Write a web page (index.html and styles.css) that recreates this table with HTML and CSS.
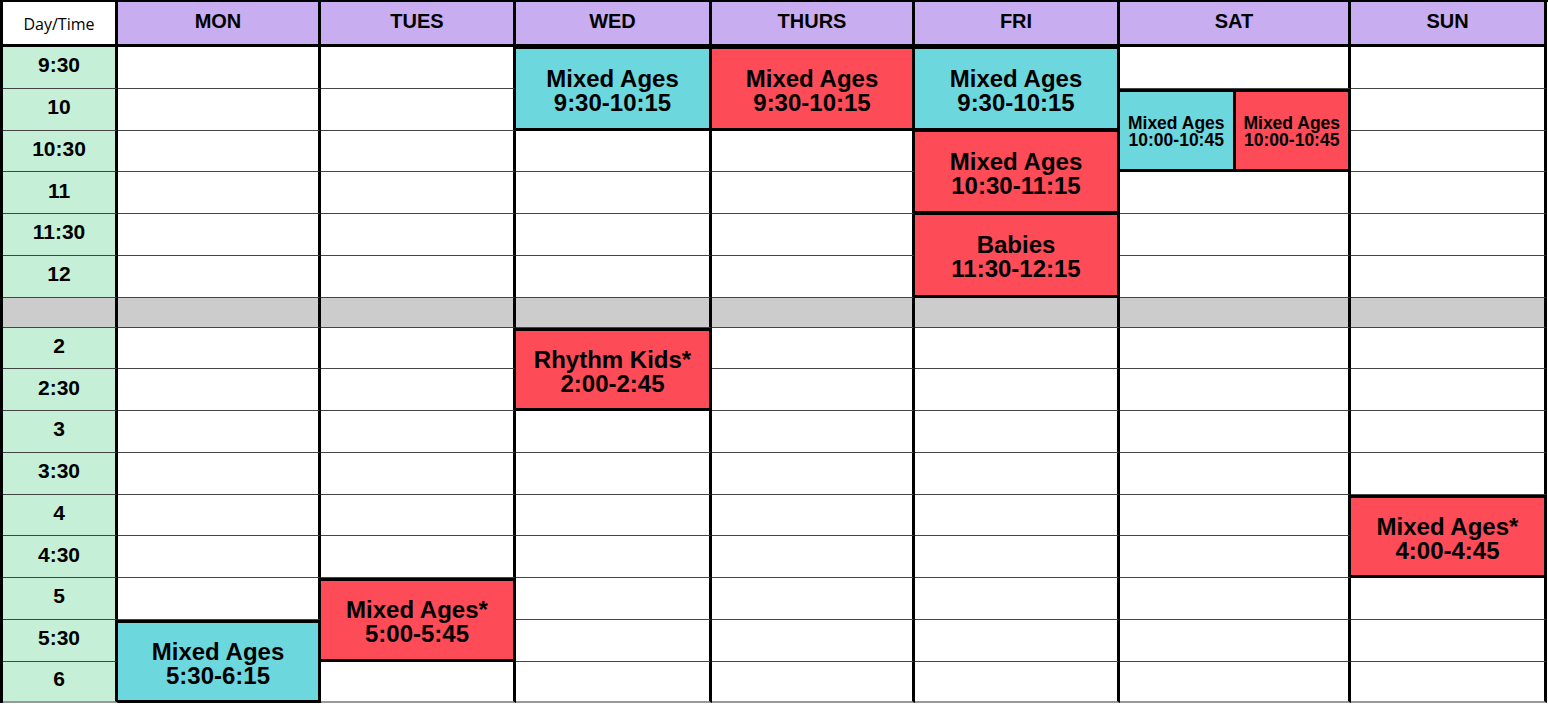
FILE: index.html
```html
<!DOCTYPE html>
<html>
<head>
<meta charset="utf-8">
<link rel="stylesheet" href="styles.css">
<title>Class Schedule</title>
</head>
<body>
<div class="schedule">
  <!-- header -->
  <div class="cell corner">Day/Time</div>
  <div class="cell head">MON</div>
  <div class="cell head">TUES</div>
  <div class="cell head">WED</div>
  <div class="cell head">THURS</div>
  <div class="cell head">FRI</div>
  <div class="cell head">SAT</div>
  <div class="cell head">SUN</div>

  <!-- 9:30 -->
  <div class="cell time">9:30</div>
  <div class="cell"></div>
  <div class="cell"></div>
  <div class="cell ev teal span2 top-head"><span>Mixed Ages<br>9:30-10:15</span></div>
  <div class="cell ev red span2 top-head"><span>Mixed Ages<br>9:30-10:15</span></div>
  <div class="cell ev teal span2 top-head"><span>Mixed Ages<br>9:30-10:15</span></div>
  <div class="cell"></div>
  <div class="cell"></div>

  <!-- 10 -->
  <div class="cell time">10</div>
  <div class="cell"></div>
  <div class="cell"></div>
  <div class="cell ev split span2">
    <div class="half teal"><span>Mixed Ages<br>10:00-10:45</span></div>
    <div class="half red"><span>Mixed Ages<br>10:00-10:45</span></div>
  </div>
  <div class="cell"></div>

  <!-- 10:30 -->
  <div class="cell time">10:30</div>
  <div class="cell"></div>
  <div class="cell"></div>
  <div class="cell"></div>
  <div class="cell"></div>
  <div class="cell ev red span2 stack"><span>Mixed Ages<br>10:30-11:15</span></div>
  <div class="cell"></div>

  <!-- 11 -->
  <div class="cell time">11</div>
  <div class="cell"></div>
  <div class="cell"></div>
  <div class="cell"></div>
  <div class="cell"></div>
  <div class="cell"></div>
  <div class="cell"></div>

  <!-- 11:30 -->
  <div class="cell time">11:30</div>
  <div class="cell"></div>
  <div class="cell"></div>
  <div class="cell"></div>
  <div class="cell"></div>
  <div class="cell ev red span2 stack"><span>Babies<br>11:30-12:15</span></div>
  <div class="cell"></div>
  <div class="cell"></div>

  <!-- 12 -->
  <div class="cell time">12</div>
  <div class="cell"></div>
  <div class="cell"></div>
  <div class="cell"></div>
  <div class="cell"></div>
  <div class="cell"></div>
  <div class="cell"></div>

  <!-- break -->
  <div class="cell gap"></div>
  <div class="cell gap"></div>
  <div class="cell gap"></div>
  <div class="cell gap"></div>
  <div class="cell gap"></div>
  <div class="cell gap"></div>
  <div class="cell gap"></div>
  <div class="cell gap"></div>

  <!-- 2 -->
  <div class="cell time">2</div>
  <div class="cell"></div>
  <div class="cell"></div>
  <div class="cell ev red span2"><span>Rhythm Kids*<br>2:00-2:45</span></div>
  <div class="cell"></div>
  <div class="cell"></div>
  <div class="cell"></div>
  <div class="cell"></div>

  <!-- 2:30 -->
  <div class="cell time">2:30</div>
  <div class="cell"></div>
  <div class="cell"></div>
  <div class="cell"></div>
  <div class="cell"></div>
  <div class="cell"></div>
  <div class="cell"></div>

  <!-- 3 -->
  <div class="cell time">3</div>
  <div class="cell"></div>
  <div class="cell"></div>
  <div class="cell"></div>
  <div class="cell"></div>
  <div class="cell"></div>
  <div class="cell"></div>
  <div class="cell"></div>

  <!-- 3:30 -->
  <div class="cell time">3:30</div>
  <div class="cell"></div>
  <div class="cell"></div>
  <div class="cell"></div>
  <div class="cell"></div>
  <div class="cell"></div>
  <div class="cell"></div>
  <div class="cell"></div>

  <!-- 4 -->
  <div class="cell time">4</div>
  <div class="cell"></div>
  <div class="cell"></div>
  <div class="cell"></div>
  <div class="cell"></div>
  <div class="cell"></div>
  <div class="cell"></div>
  <div class="cell ev red span2"><span>Mixed Ages*<br>4:00-4:45</span></div>

  <!-- 4:30 -->
  <div class="cell time">4:30</div>
  <div class="cell"></div>
  <div class="cell"></div>
  <div class="cell"></div>
  <div class="cell"></div>
  <div class="cell"></div>
  <div class="cell"></div>

  <!-- 5 -->
  <div class="cell time">5</div>
  <div class="cell"></div>
  <div class="cell ev red span2"><span>Mixed Ages*<br>5:00-5:45</span></div>
  <div class="cell"></div>
  <div class="cell"></div>
  <div class="cell"></div>
  <div class="cell"></div>
  <div class="cell"></div>

  <!-- 5:30 -->
  <div class="cell time">5:30</div>
  <div class="cell ev teal span2"><span>Mixed Ages<br>5:30-6:15</span></div>
  <div class="cell"></div>
  <div class="cell"></div>
  <div class="cell"></div>
  <div class="cell"></div>
  <div class="cell"></div>

  <!-- 6 -->
  <div class="cell time last">6</div>
  <div class="cell last"></div>
  <div class="cell last"></div>
  <div class="cell last"></div>
  <div class="cell last"></div>
  <div class="cell last"></div>
  <div class="cell last"></div>
</div>
</body>
</html>
```

FILE: styles.css
```css
* { box-sizing: border-box; }

html, body {
  margin: 0;
  padding: 0;
  background: #ffffff;
}

body {
  font-family: "Liberation Sans", Arial, sans-serif;
  color: #000;
}

.schedule {
  display: grid;
  width: 1548px;
  grid-template-columns: 115px 203px 195px 196px 203px 205px 231px 196px;
  grid-template-rows: 45px repeat(6, 41.75px) 30px repeat(9, 41.75px);
  border-left: 3px solid #000;
  border-top: 2px solid #000;
}

.cell {
  display: flex;
  align-items: center;
  justify-content: center;
  text-align: center;
  background: #fff;
  border-right: 3px solid #000;
  border-bottom: 1px solid #444;
  min-width: 0;
}

.corner {
  font-family: "Open Sans", "Liberation Sans", sans-serif;
  font-size: 16px;
  font-weight: 400;
  border-bottom: 3px solid #000;
  padding-top: 2px;
}

.head {
  background: #c8aef0;
  font-weight: 700;
  font-size: 20px;
  border-bottom: 3px solid #000;
  padding-bottom: 4px;
}

.time {
  background: #c6efd8;
  font-weight: 700;
  font-size: 21px;
  padding-bottom: 4px;
}

.gap {
  background: #cccccc;
  padding: 0;
}

.last {
  border-bottom: 2px solid #999;
}

.ev {
  font-weight: 700;
  font-size: 24px;
  line-height: 24px;
  border-top: 3px solid #000;
  border-bottom: 3px solid #000;
  padding-top: 5px;
}

.ev.top-head {
  border-top: 2px solid #000;
}

.ev.stack {
  border-top: 1px solid #000;
}

.span2 {
  grid-row: span 2;
}

.teal { background: #6cd8dd; }
.red { background: #fd4b57; }

.split {
  align-items: stretch;
  justify-content: stretch;
  font-size: 17.5px;
  line-height: 17px;
  padding-top: 0;
}

.half {
  flex: 1 1 0;
  display: flex;
  align-items: center;
  justify-content: center;
  padding-top: 2px;
}

.half.teal {
  border-right: 3px solid #000;
}
```
